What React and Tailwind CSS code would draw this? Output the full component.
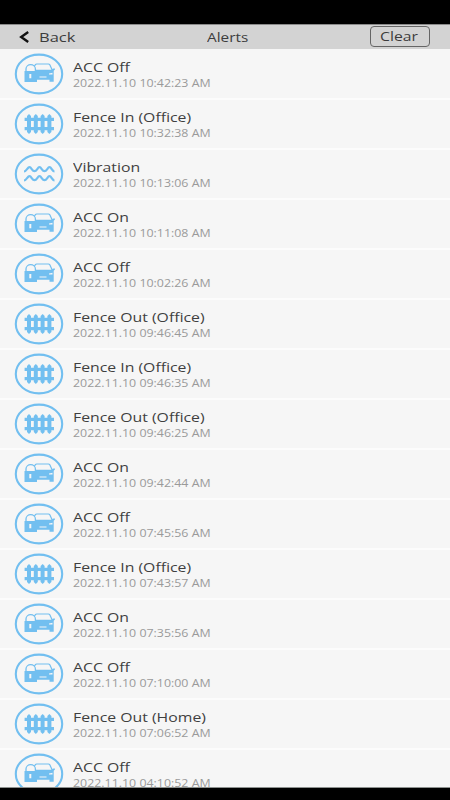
import clsx from 'clsx';

const ALERTS = [
  { type: 'acc', title: 'ACC Off', time: '2022.11.10 10:42:23 AM' },
  { type: 'fence', title: 'Fence In (Office)', time: '2022.11.10 10:32:38 AM' },
  { type: 'vibration', title: 'Vibration', time: '2022.11.10 10:13:06 AM' },
  { type: 'acc', title: 'ACC On', time: '2022.11.10 10:11:08 AM' },
  { type: 'acc', title: 'ACC Off', time: '2022.11.10 10:02:26 AM' },
  { type: 'fence', title: 'Fence Out (Office)', time: '2022.11.10 09:46:45 AM' },
  { type: 'fence', title: 'Fence In (Office)', time: '2022.11.10 09:46:35 AM' },
  { type: 'fence', title: 'Fence Out (Office)', time: '2022.11.10 09:46:25 AM' },
  { type: 'acc', title: 'ACC On', time: '2022.11.10 09:42:44 AM' },
  { type: 'acc', title: 'ACC Off', time: '2022.11.10 07:45:56 AM' },
  { type: 'fence', title: 'Fence In (Office)', time: '2022.11.10 07:43:57 AM' },
  { type: 'acc', title: 'ACC On', time: '2022.11.10 07:35:56 AM' },
  { type: 'acc', title: 'ACC Off', time: '2022.11.10 07:10:00 AM' },
  { type: 'fence', title: 'Fence Out (Home)', time: '2022.11.10 07:06:52 AM' },
  { type: 'acc', title: 'ACC Off', time: '2022.11.10 04:10:52 AM' },
];

export default function App() {
  return (
    <div className="flex h-screen flex-col overflow-hidden bg-black font-['Open_Sans',sans-serif]">
      <Header />
      <main className="mb-3 min-h-0 flex-1 overflow-hidden border-b border-[#8d918f] bg-[#f6f6f6]">
        {ALERTS.map((alert) => (
          <AlertRow key={alert.time} alert={alert} />
        ))}
      </main>
    </div>
  );
}

function Header() {
  return (
    <header className="mt-6 grid h-[25px] shrink-0 grid-cols-3 items-center border-t border-[#8a8a8a] bg-[#d3d3d3] text-[13px] text-[#3c3c3c]">
      <button className="flex items-center pt-px pl-[19px]">
        <svg className="-mt-0.5" width="11" height="12" viewBox="0 0 11 12" fill="none" stroke="#111" strokeWidth="2.4">
          <path d="M9.2 1 2.2 6l7 5" />
        </svg>
        <Stretched className="ml-[9px] scale-x-[1.27]">Back</Stretched>
      </button>
      <h1 className="pt-0.5 pl-[57px]">
        <Stretched className="scale-x-[1.18]">Alerts</Stretched>
      </h1>
      <button className="mr-5 mb-px flex h-[21px] w-[60px] items-center justify-self-end rounded-[4px] border border-[#666] pb-0.5 pl-[9px]">
        <Stretched className="scale-x-[1.21]">Clear</Stretched>
      </button>
    </header>
  );
}

function AlertRow({ alert }) {
  return (
    <div className="flex h-[50px] items-center border-b-2 border-[#fcfcfc] pl-3.5 first:h-[51px] first:pt-px">
      <AlertIcon type={alert.type} />
      <div className="ml-[9px] flex flex-col pt-px">
        <Stretched className="scale-x-[1.215] text-[13px] leading-[17px] text-[#3f3f3f]">{alert.title}</Stretched>
        <Stretched className="scale-x-[1.18] text-[10.5px] leading-[15px] text-[#9a9a9a]">{alert.time}</Stretched>
      </div>
    </div>
  );
}

// Wide lettering used all over the screen
function Stretched({ className, children }) {
  return (
    <span className={clsx('block origin-left self-start whitespace-nowrap', className)}>
      {children}
    </span>
  );
}

function AlertIcon({ type }) {
  return (
    <svg className="h-[42px] w-[50px] shrink-0" viewBox="0 0 50 42" fill="none" stroke="#72bff0">
      <ellipse cx="25" cy="21" rx="23.2" ry="19.4" strokeWidth="2.1" />
      {type === 'acc' && <CarLock />}
      {type === 'fence' && <Fence />}
      {type === 'vibration' && <Waves />}
    </svg>
  );
}

function CarLock() {
  return (
    <>
      <path d="M12 18.5V16a4.7 4.4 0 0 1 9.4 0v2.5" strokeWidth="1.3" />
      <path d="M20.2 13.5l1.2-1.9q.4-.6 1.3-.6h11.7q1 0 1.4.8l2.6 5.6H21.5" strokeWidth="1.2" />
      <path
        d="M10.5 18h11l2-.8H38l.2-1.3 2.3-.7.5 1.2-1.3 1.3v11h-4.2v-2H23v2.3H10.5z"
        fill="#72bff0"
        stroke="none"
      />
      <path d="M15.3 21h2v4.3h-2zM25.500 23.500h7v1.100h-7zM35 20.600l3.500-.8v1.600H35z" fill="#f6f6f6" stroke="none" />
    </>
  );
}

const POSTS = [15, 21.8, 28.6, 35.4];

function Fence() {
  return (
    <>
      <path d="M10.6 16.4h29.4M10.6 25.6h29.4" strokeWidth="3.2" />
      {POSTS.map((x) => (
        <path
          key={x}
          d="M-2 13 0 11l2 2v16l-2 2-2-2z"
          transform={`translate(${x} 0)`}
          fill="#72bff0"
          stroke="none"
        />
      ))}
    </>
  );
}

function Waves() {
  const wave = 'M10 18.5c2.5 0 3.5-4.3 5.5-4.3s2.5 4 5 4 3-4 5-4 2.5 4 5 4 3-4 5-4 2.5 4.3 5 4.3';
  return (
    <>
      <path d={wave} strokeWidth="2.2" />
      <path d={wave} transform="translate(0 9)" strokeWidth="2.2" />
    </>
  );
}
